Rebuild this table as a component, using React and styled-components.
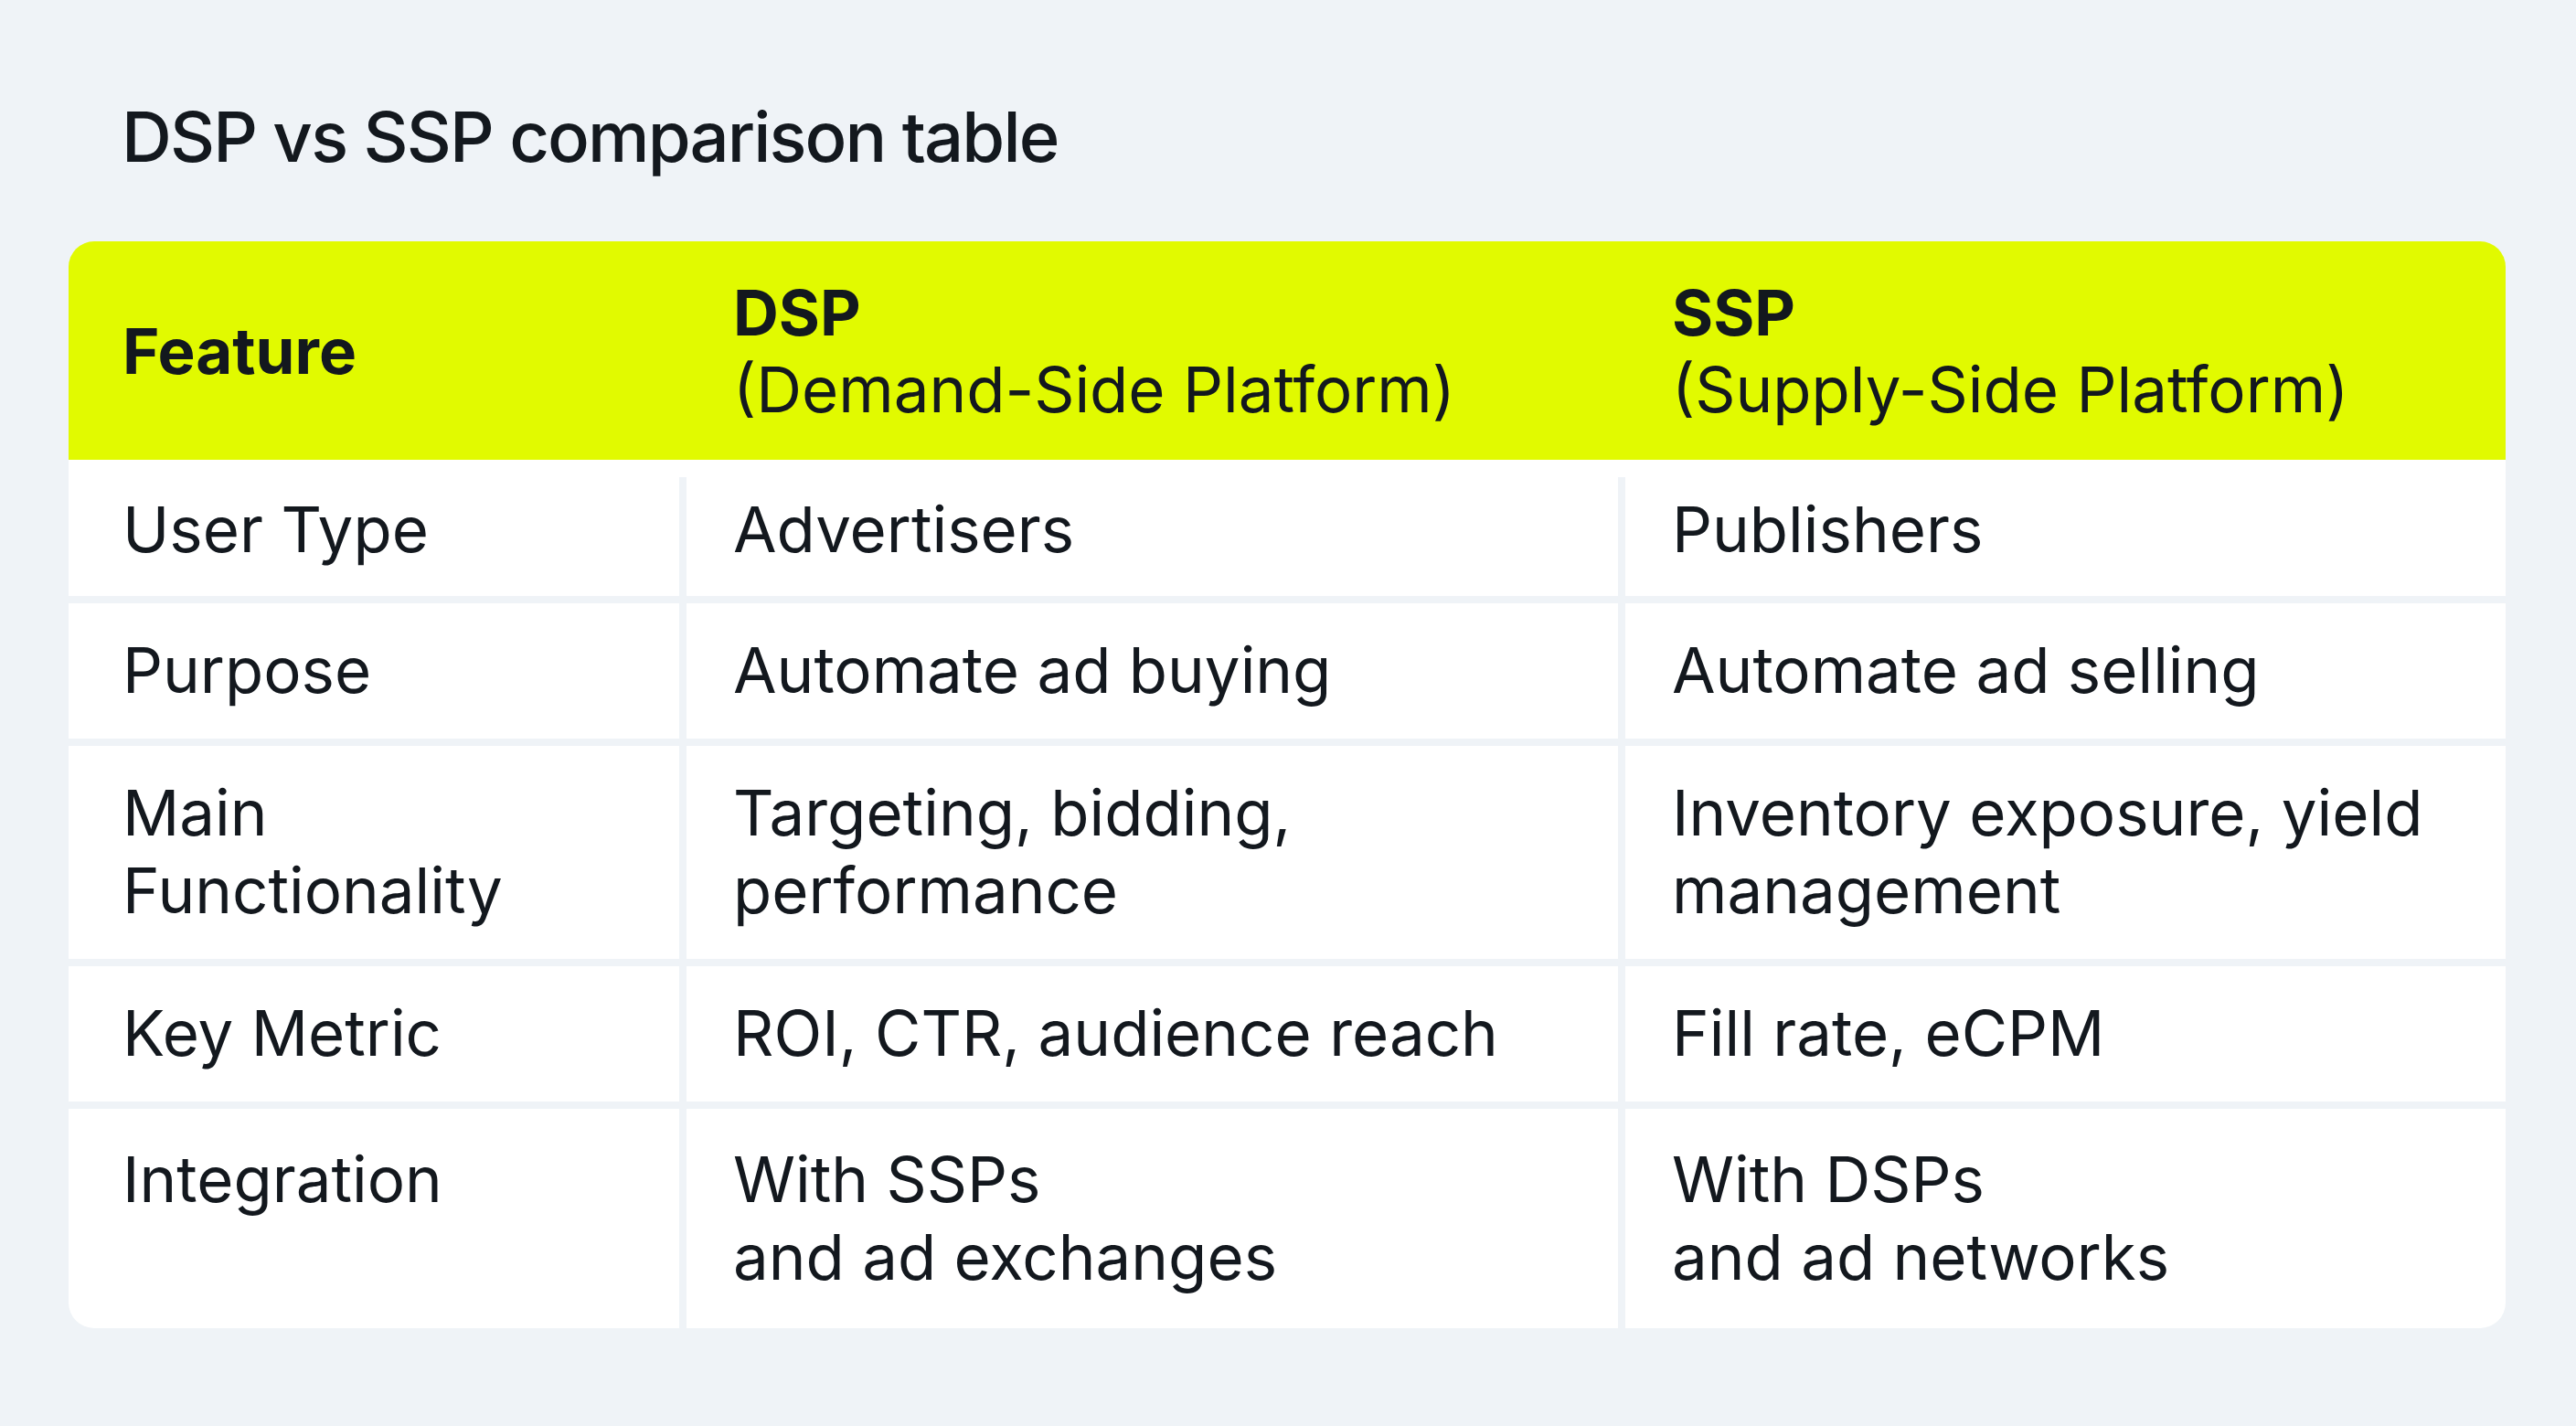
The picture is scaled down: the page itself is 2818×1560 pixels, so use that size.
import styled, { createGlobalStyle } from 'styled-components';

const GlobalStyle = createGlobalStyle`
	html, body {
		margin: 0;
		padding: 0;
		background: #eff3f7;
	}
	body {
		font-family: Inter, 'Noto Sans', 'Liberation Sans', sans-serif;
		color: #13181e;
	}
`;

const rows = [
	{ feature: 'User Type', dsp: 'Advertisers', ssp: 'Publishers', first: true },
	{ feature: 'Purpose', dsp: 'Automate ad buying', ssp: 'Automate ad selling' },
	{
		feature: ['Main', 'Functionality'],
		dsp: ['Targeting, bidding,', 'performance'],
		ssp: ['Inventory exposure, yield', 'management'],
	},
	{ feature: 'Key Metric', dsp: 'ROI, CTR, audience reach', ssp: 'Fill rate, eCPM' },
	{
		feature: 'Integration',
		dsp: ['With SSPs', 'and ad exchanges'],
		ssp: ['With DSPs', 'and ad networks'],
		last: true,
	},
];

function Lines({ value }) {
	if (!Array.isArray(value)) return value;
	return value.map((line, i) => (
		<span key={i}>
			{line}
			{i < value.length - 1 && <br />}
		</span>
	));
}

export default function App() {
	return (
		<>
			<GlobalStyle />
			<Page>
				<Title>DSP vs SSP comparison table</Title>
				<Table>
					<Header>
						<HeadCell $col={0}>
							<strong>Feature</strong>
						</HeadCell>
						<HeadCell $col={1}>
							<strong>DSP</strong>
							<br />
							(Demand-Side Platform)
						</HeadCell>
						<HeadCell $col={2}>
							<strong>SSP</strong>
							<br />
							(Supply-Side Platform)
						</HeadCell>
					</Header>
					<Body>
						{rows.map((row, i) => (
							<Row key={i} $first={row.first}>
								<Cell $col={0} $first={row.first} $last={row.last}>
									<Lines value={row.feature} />
								</Cell>
								<Cell $col={1} $first={row.first} $last={row.last}>
									<Lines value={row.dsp} />
								</Cell>
								<Cell $col={2} $first={row.first} $last={row.last}>
									<Lines value={row.ssp} />
								</Cell>
							</Row>
						))}
					</Body>
				</Table>
			</Page>
		</>
	);
}

const Page = styled.div`
	padding: 104px 0 108px 75px;
`;

const Title = styled.h1`
	margin: 0 0 69px 58px;
	font-size: 76px;
	font-weight: 500;
	line-height: 91px;
	letter-spacing: -1.9px;
`;

const columns = '668px 1019px 963px';

const Table = styled.div`
	width: 2666px;
	border-radius: 28px;
	overflow: hidden;
	background: #eff3f7;
`;

const Header = styled.div`
	display: grid;
	grid-template-columns: ${columns};
	column-gap: 8px;
	align-items: center;
	height: 239px;
	background: #e1fa00;
`;

const HeadCell = styled.div`
	padding-left: ${(p) => (p.$col === 0 ? 59 : 51)}px;
	font-size: 69px;
	line-height: 84px;
	font-weight: 400;

	strong {
		font-weight: 700;
	}
`;

const Body = styled.div`
	display: flex;
	flex-direction: column;
	gap: 8px;
`;

const Row = styled.div`
	display: grid;
	grid-template-columns: ${columns};
	column-gap: 8px;
	padding-top: ${(p) => (p.$first ? 19 : 0)}px;
	background: ${(p) => (p.$first ? 'linear-gradient(#fff 19px, transparent 19px)' : 'transparent')};
`;

const Cell = styled.div`
	background: #fff;
	padding: ${(p) => (p.$first ? '15px 0 30px' : p.$last ? '35px 0' : '31px 0 32px')};
	padding-left: ${(p) => (p.$col === 0 ? 59 : 51)}px;
	font-size: 69px;
	line-height: 85px;
	font-weight: 400;
`;
